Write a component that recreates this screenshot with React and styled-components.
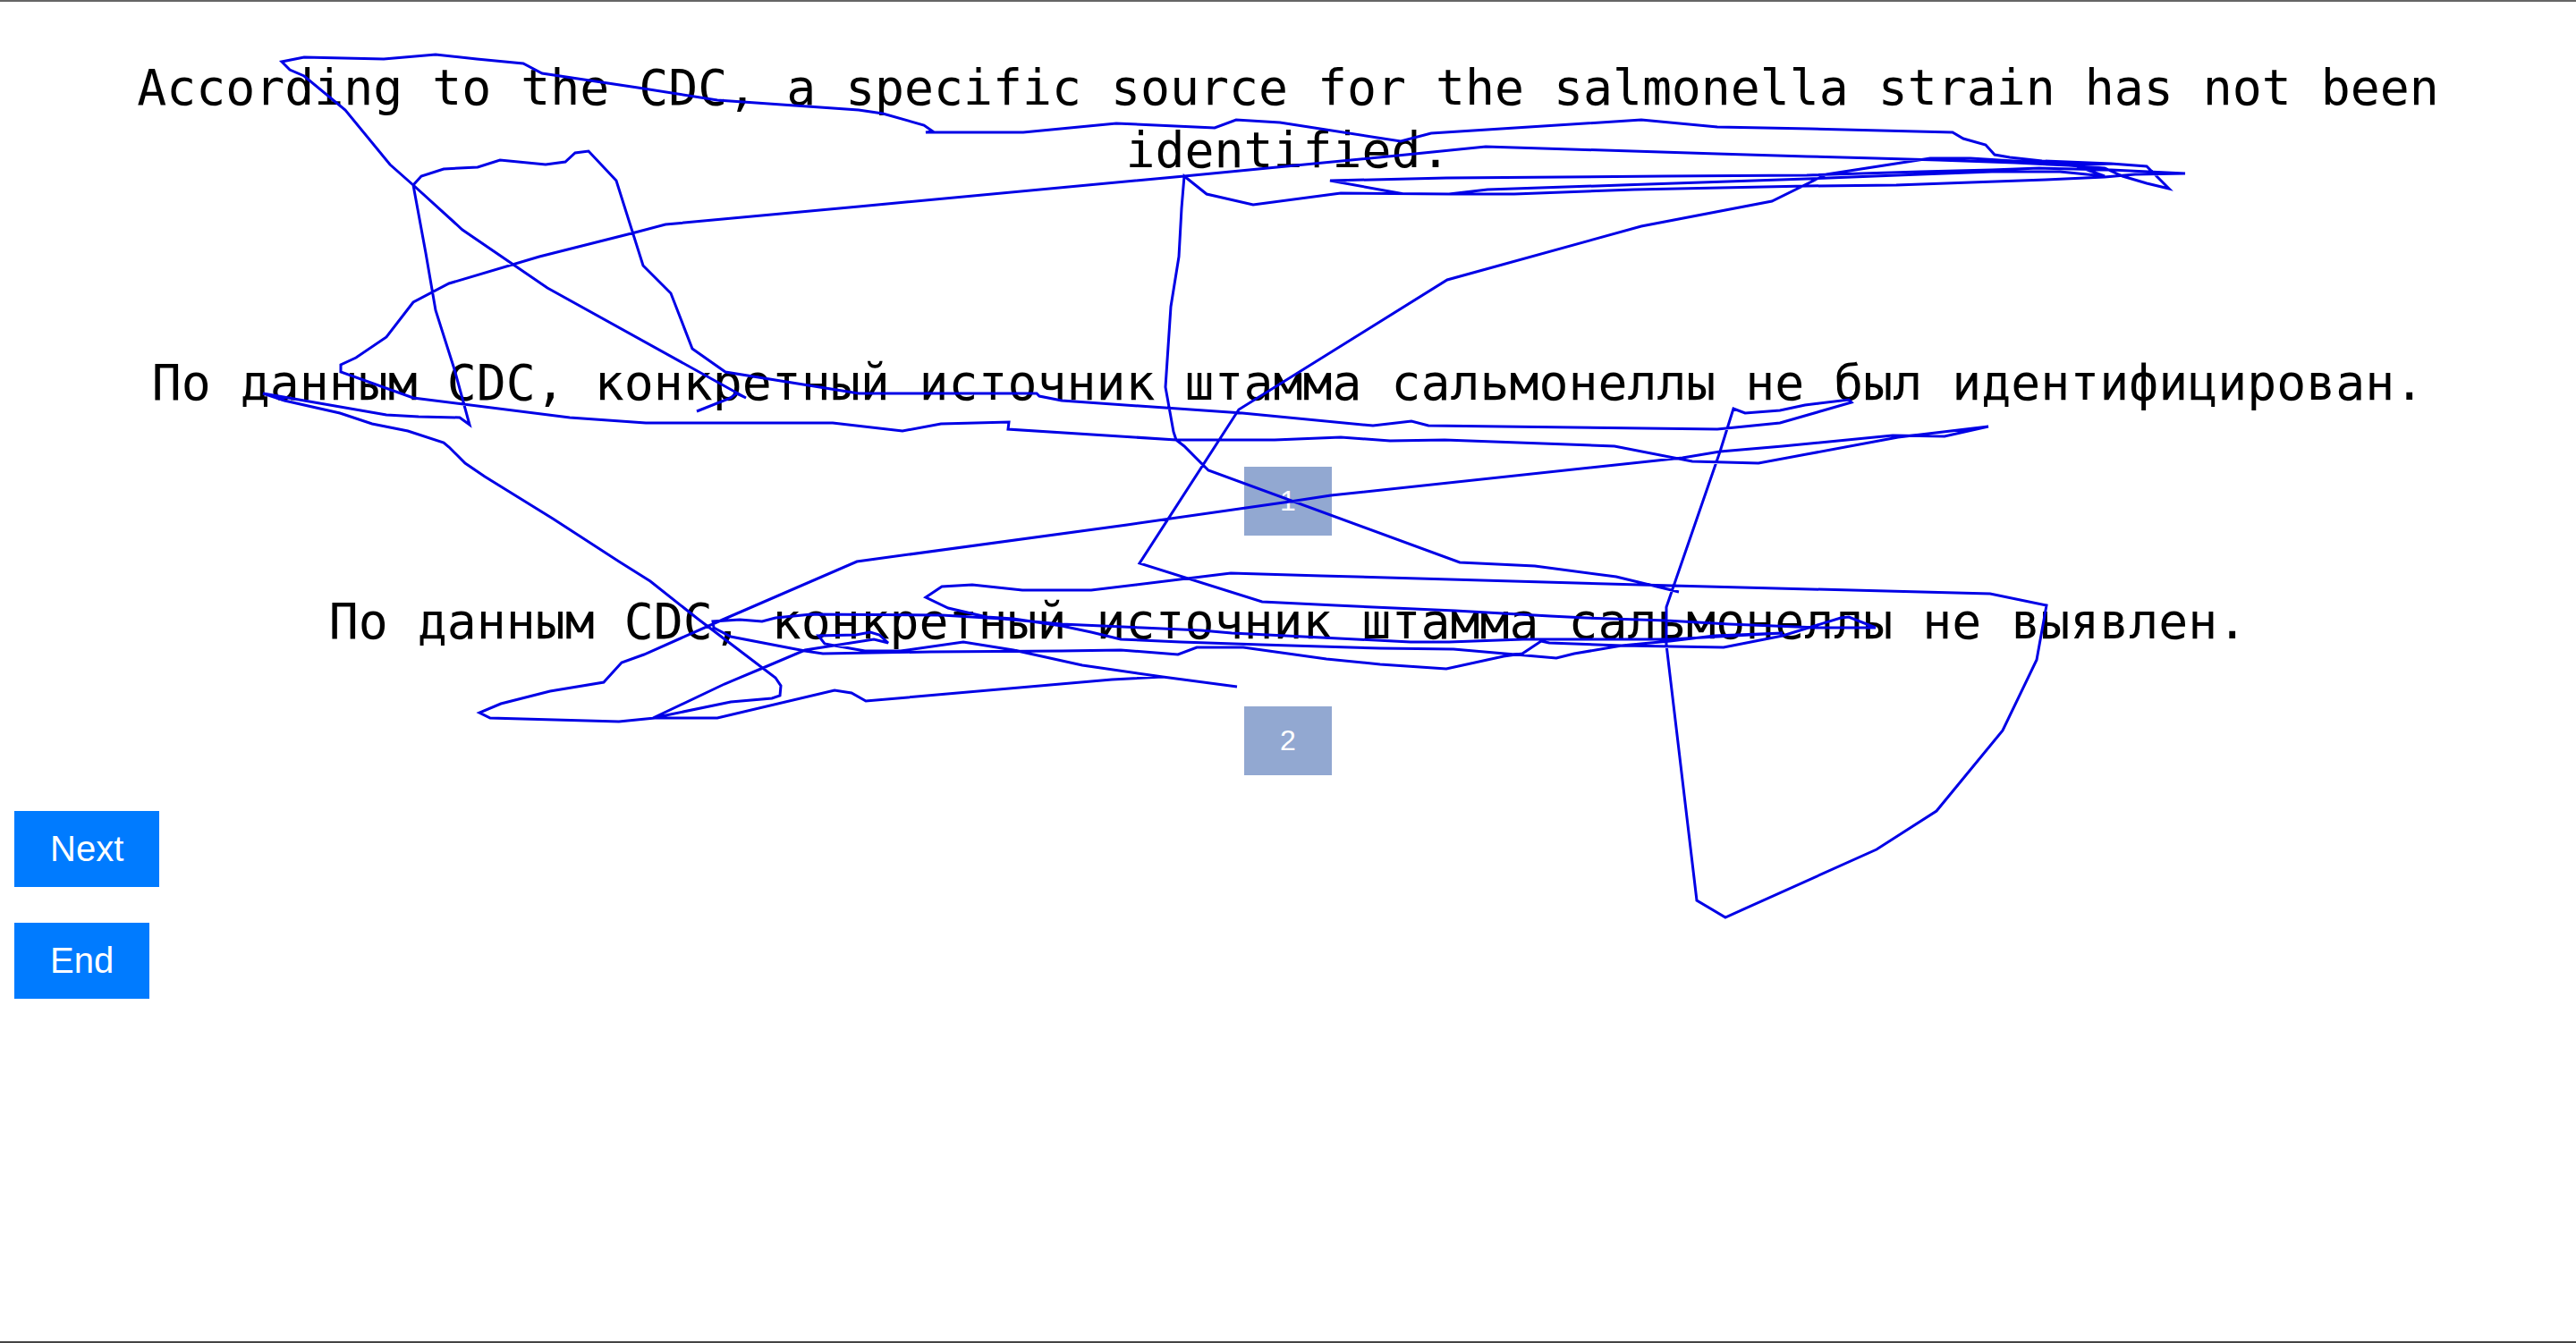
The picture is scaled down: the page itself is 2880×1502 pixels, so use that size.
import styled, { createGlobalStyle } from "styled-components";

const GlobalStyle = createGlobalStyle`
  html, body {
    margin: 0;
    padding: 0;
    background: #fff;
  }
`;

// recorded pointer trace, page pixels
const TRACE = [
  [779,460],[817,445],[823,440],[834,445],[612,322],[517,257],[462,207],[436,184],[386,123],[340,85],[324,78],[315,69],
  [340,64],[429,66],[487,61],[533,66],[585,71],[606,82],[713,98],[802,112],[960,123],[987,127],[1033,140],[1043,147],
  [1035,148],[1144,148],[1248,138],[1358,143],[1382,134],[1431,137],[1566,158],[1600,149],[1835,134],[1920,142],
  [2024,144],[2183,148],[2195,155],[2220,162],[2230,173],[2247,176],[2283,180],[2360,183],[2400,186],[2425,211],
  [2400,205],[2373,197],[2353,188],[2313,185],[2253,182],[2167,179],[2097,177],[2020,175],[1920,172],[1661,164],
  [1572,173],[1324,197],[960,231],[744,251],[710,260],[603,287],[502,317],[462,338],[432,377],[398,400],[381,408],
  [381,416],[462,445],[637,467],[722,473],[931,473],[1009,482],[1052,474],[1128,472],[1127,480],[1315,492],[1425,492],
  [1499,489],[1554,493],[1615,492],[1805,499],[1892,516],[1966,518],[2122,489],[2223,477],[2174,488],[2116,487],
  [1993,499],[1923,505],[1881,512],[1488,554],[1442,561],[1260,587],[958,628],[808,693],[720,732],[695,741],[675,763],
  [615,773],[560,787],[536,797],[548,803],[692,807],[732,803],[802,803],[933,772],[952,775],[968,784],[1220,762],
  [1243,760],[1300,757],[1383,768],[1300,757],[1210,744],[1133,727],[1077,718],[1007,728],[967,728],[933,722],[922,720],
  [915,711],[957,710],[973,707],[983,710],[993,719],[977,715],[900,727],[853,747],[810,765],[730,803],[817,785],[863,781],
  [872,778],[873,767],[867,758],[813,717],[780,692],[727,650],[692,628],[618,580],[542,533],[520,518],[502,500],[496,495],
  [456,482],[416,474],[380,462],[318,448],[294,440],[432,464],[468,466],[514,467],[525,475],[508,413],[487,347],[476,283],
  [462,207],[471,197],[496,189],[534,187],[559,179],[610,184],[632,181],[643,171],[658,169],[689,202],[719,297],[750,328],
  [774,390],[811,416],[960,440],[1159,440],[1162,443],[1187,448],[1389,462],[1535,476],[1578,471],[1597,476],[1920,480],
  [1990,473],[2070,450],[2067,447],[2018,453],[1990,459],[1951,462],[1938,457],[1923,505],[1863,679],[1863,721],
  [1897,1007],[1929,1026],[2098,950],[2165,907],[2239,817],[2277,738],[2288,677],[2225,664],[1870,655],[1477,644],
  [1376,641],[1220,660],[1143,660],[1087,654],[1053,656],[1035,668],[1060,680],[1103,690],[1133,692],[1187,700],
  [1220,707],[1253,715],[1320,718],[1410,721],[1543,725],[1625,726],[1740,736],[1760,731],[1813,722],[1867,717],
  [1917,711],[1993,708],[1867,715],[1730,715],[1703,715],[1620,718],[1577,718],[1477,713],[1377,708],[1343,705],
  [1277,702],[1187,698],[1120,692],[1053,688],[907,687],[867,691],[852,695],[827,693],[797,695],[798,702],[817,712],
  [900,728],[920,731],[1040,729],[1187,728],[1253,727],[1317,732],[1338,724],[1390,724],[1483,737],[1543,743],[1617,748],
  [1681,734],[1702,731],[1723,717],[1732,719],[1813,722],[1927,724],[1993,711],[2058,691],[2067,690],[2097,702],
  [2033,702],[1933,698],[1863,694],[1773,691],[1733,689],[1627,683],[1493,677],[1411,673],[1274,630],[1385,458],
  [1618,313],[1835,253],[1981,225],[2042,195],[2158,177],[2203,177],[2283,182],[2360,183],[2320,185],[2353,197],
  [2303,192],[2227,192],[2147,195],[2020,200],[1813,207],[1663,212],[1620,217],[1570,217],[1487,202],[1617,199],
  [1860,197],[2020,196],[2147,192],[2227,190],[2280,188],[2360,190],[2443,194],[2387,195],[2353,198],[2287,201],
  [2203,204],[2120,207],[2020,208],[1827,212],[1693,217],[1620,217],[1499,216],[1401,229],[1349,217],[1324,197],
  [1321,233],[1318,287],[1309,343],[1303,433],[1312,483],[1315,492],[1324,499],[1351,526],[1632,629],[1716,633],
  [1807,645],[1877,662],
];

function Trace() {
  const points = TRACE.map((p) => p.join(",")).join(" ");
  return (
    <TraceSvg width="2880" height="1502" viewBox="0 0 2880 1502">
      <polyline points={points} fill="none" stroke="#0000e6" strokeWidth="3" />
    </TraceSvg>
  );
}

function App() {
  return (
    <>
      <GlobalStyle />
      <Page>
        <Sentence $top={61}>
          According to the CDC, a specific source for the salmonella strain has not been identified.
        </Sentence>
        <Sentence $top={190}>
          По данным CDC, конкретный источник штамма сальмонеллы не был идентифицирован.
        </Sentence>
        <Choice $top={59}>1</Choice>
        <Sentence $top={61}>По данным CDC, конкретный источник штамма сальмонеллы не выявлен.</Sentence>
        <Choice $top={60}>2</Choice>
        <Controls>
          <ActionButton>Next</ActionButton>
          <ActionButton>End</ActionButton>
        </Controls>
        <Trace />
      </Page>
    </>
  );
}

const Page = styled.div`
  position: relative;
  box-sizing: border-box;
  width: 2880px;
  height: 1502px;
  overflow: hidden;
  border-top: 2px solid #666;
  border-bottom: 2px solid #444;
  display: flex;
  flex-direction: column;
  background: #fff;
`;

const Sentence = styled.p`
  margin: ${(p) => p.$top}px 0 0;
  font-family: "DejaVu Sans Mono", monospace;
  font-size: 54.8px;
  line-height: 70px;
  color: #000;
  text-align: center;
`;

const Choice = styled.div`
  align-self: center;
  margin-top: ${(p) => p.$top}px;
  width: 98px;
  height: 77px;
  display: flex;
  align-items: center;
  justify-content: center;
  background: #92a8d1;
  color: #fff;
  font-family: "Liberation Sans", Arial, sans-serif;
  font-size: 32px;
`;

const Controls = styled.div`
  margin-top: 40px;
  padding-left: 16px;
  display: flex;
  flex-direction: column;
  align-items: flex-start;
  gap: 40px;
`;

const ActionButton = styled.button`
  height: 85px;
  padding: 0 40px;
  border: none;
  background: #007bff;
  color: #fff;
  font-family: "Liberation Sans", Arial, sans-serif;
  font-size: 40px;
`;

const TraceSvg = styled.svg`
  position: absolute;
  top: -2px;
  left: 0;
  pointer-events: none;
`;

export default App;
